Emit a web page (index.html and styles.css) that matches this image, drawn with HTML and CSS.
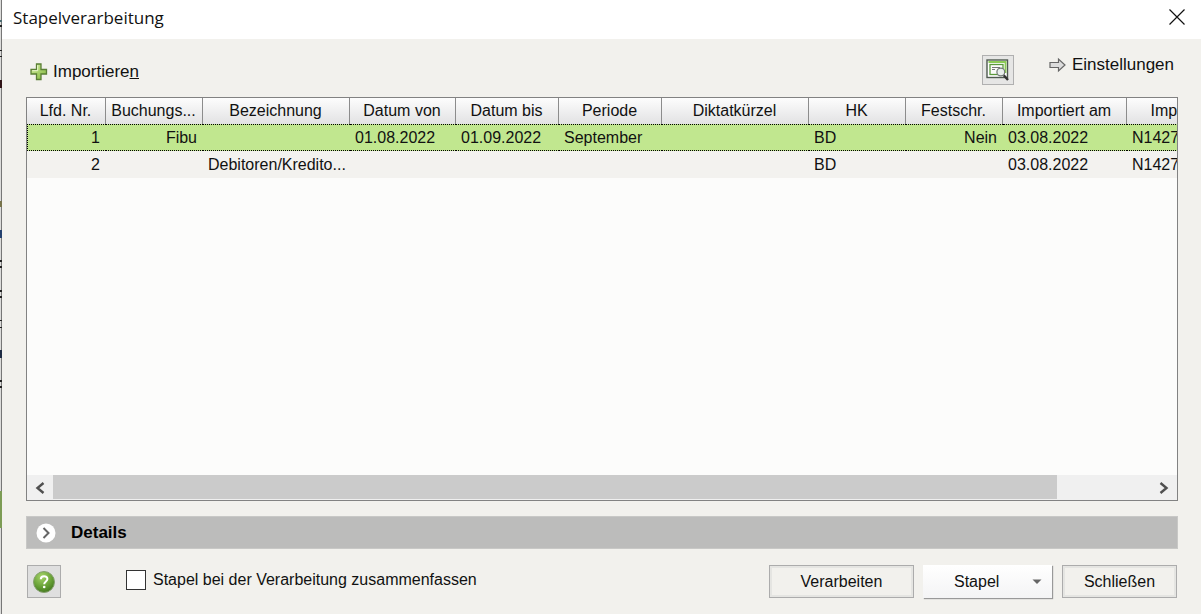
FILE: index.html
```html
<!DOCTYPE html>
<html lang="de">
<head>
    <meta charset="UTF-8">
    <meta name="viewport" content="width=device-width, initial-scale=1.0">
    <title>Stapelverarbeitung</title>
    <link rel="stylesheet" href="styles.css">
</head>
<body>
    <div class="screen">
        <!-- Edge of the window behind the dialog -->
        <svg class="backdrop" width="2" height="614" aria-hidden="true">
            <rect x="0" y="0" width="1" height="614" fill="#dcdcda"/>
            <rect x="1" y="0" width="1" height="614" fill="#777"/>
            <g fill="#222">
                <rect y="20" width="2" height="2" fill="#4a6a70"/>
                <rect y="25" width="2" height="2"/>
                <rect y="50" width="2" height="1"/>
                <rect y="56" width="2" height="1"/>
                <rect y="80" width="2" height="8" fill="#301418"/>
                <rect y="201" width="2" height="6" fill="#77734a"/>
                <rect y="230" width="2" height="8" fill="#24406e"/>
                <rect y="260" width="2" height="2"/>
                <rect y="266" width="2" height="2"/>
                <rect y="290" width="2" height="2"/>
                <rect y="296" width="2" height="2"/>
                <rect y="320" width="2" height="1"/>
                <rect y="327" width="2" height="1"/>
                <rect y="350" width="2" height="8" fill="#1e2c44"/>
                <rect y="380" width="2" height="2"/>
                <rect y="386" width="2" height="2"/>
                <rect y="491" width="2" height="37" fill="#7d9c55"/>
            </g>
        </svg>

        <div class="dialog">
            <header class="titlebar">
                <h1>Stapelverarbeitung</h1>
                <button class="close" aria-label="Fenster schließen">
                    <svg width="16" height="16" viewBox="0 0 16 16"><path d="M.5.5l15 15M15.5.5l-15 15" stroke="#111" stroke-width="1.2"/></svg>
                </button>
            </header>

            <main class="content">
                <div class="toolbar">
                    <button class="link-button import">
                        <svg width="18" height="18" viewBox="0 0 18 18">
                            <defs>
                                <linearGradient id="plus" x1="0" y1="0" x2="1" y2="1">
                                    <stop offset="0" stop-color="#d3eda0"/>
                                    <stop offset="1" stop-color="#7fb53a"/>
                                </linearGradient>
                            </defs>
                            <path d="M6.5 1h4.500v5.500h5.500v4.500h-5.500v5.500h-4.500v-5.500h-5.500v-4.500h5.500z" fill="url(#plus)" stroke="#5a7f35" stroke-width="1.300"/>
                            <path d="M7.700 2.200v5.500h-5.500" fill="none" stroke="#eef9d2"/>
                        </svg>
                        <span>Importiere<u>n</u></span>
                    </button>
                    <button class="preview" aria-label="Vorschau">
                        <svg width="24" height="24" viewBox="0 0 24 24">
                            <rect x="1" y="2" width="20.500" height="17.500" fill="#fff" stroke="#4f5a50" stroke-width="1.400"/>
                            <path d="M2.500 4h18M19.500 3v12" stroke="#8ccb55" stroke-width="1.800" fill="none"/>
                            <rect x="4" y="6.500" width="13" height="10" fill="#fbfcf9" stroke="#5b9a3c" stroke-width="1.300"/>
                            <path d="M6 9.500h8M6 11.500h3" stroke="#777"/>
                            <path d="M17.500 17l4.500 5" stroke="#333" stroke-width="2.400"/>
                            <circle cx="14.800" cy="14" r="3.900" fill="#e9efec" stroke="#727a76" stroke-width="1.200"/>
                        </svg>
                    </button>
                    <button class="link-button settings">
                        <svg width="18" height="16" viewBox="0 0 18 16">
                            <path d="M1 5.500h8.500v-3.500l6.500 6-6.500 6v-3.500h-8.500z" fill="#dcdcdc" stroke="#666" stroke-width="1.200"/>
                        </svg>
                        <span>Einstellungen</span>
                    </button>
                </div>

                <div class="list">
                    <div class="list-view">
                        <table>
                            <colgroup>
                                <col class="w-nr"><col class="w-code"><col class="w-name"><col class="w-from"><col class="w-date"><col class="w-date">
                                <col class="w-name"><col class="w-code"><col class="w-code"><col class="w-import"><col class="w-name">
                            </colgroup>
                            <thead>
                                <tr>
                                    <th>Lfd. Nr.</th>
                                    <th>Buchungs...</th>
                                    <th>Bezeichnung</th>
                                    <th>Datum von</th>
                                    <th>Datum bis</th>
                                    <th>Periode</th>
                                    <th>Diktatkürzel</th>
                                    <th>HK</th>
                                    <th>Festschr.</th>
                                    <th>Importiert am</th>
                                    <th>Importiert von</th>
                                </tr>
                            </thead>
                            <tbody>
                                <tr class="selected">
                                    <td class="right">1</td>
                                    <td class="right">Fibu</td>
                                    <td></td>
                                    <td>01.08.2022</td>
                                    <td>01.09.2022</td>
                                    <td>September</td>
                                    <td></td>
                                    <td>BD</td>
                                    <td class="right">Nein</td>
                                    <td>03.08.2022</td>
                                    <td>N1427</td>
                                </tr>
                                <tr>
                                    <td class="right">2</td>
                                    <td></td>
                                    <td>Debitoren/Kredito...</td>
                                    <td></td>
                                    <td></td>
                                    <td></td>
                                    <td></td>
                                    <td>BD</td>
                                    <td></td>
                                    <td>03.08.2022</td>
                                    <td>N1427</td>
                                </tr>
                            </tbody>
                        </table>
                    </div>
                    <div class="scrollbar">
                        <button aria-label="Nach links">
                            <svg width="10" height="12" viewBox="0 0 10 12"><path d="M8.500 1l-6 5 6 5" fill="none" stroke="#505050" stroke-width="2.400"/></svg>
                        </button>
                        <div class="track"><div class="thumb"></div></div>
                        <button aria-label="Nach rechts">
                            <svg width="10" height="12" viewBox="0 0 10 12"><path d="M1.500 1l6 5-6 5" fill="none" stroke="#505050" stroke-width="2.400"/></svg>
                        </button>
                    </div>
                </div>

                <button class="details">
                    <svg width="20" height="20" viewBox="0 0 20 20">
                        <circle cx="10" cy="10" r="9.500" fill="#fff"/>
                        <path d="M7.500 5l5 5-5 5" fill="none" stroke="#666" stroke-width="2"/>
                    </svg>
                    <span>Details</span>
                </button>

                <footer class="actions">
                    <button class="help" aria-label="Hilfe">
                        <svg width="24" height="24" viewBox="0 0 24 24">
                            <defs>
                                <radialGradient id="ball" cx=".4" cy=".25" r=".8">
                                    <stop offset="0" stop-color="#a6d46a"/>
                                    <stop offset=".6" stop-color="#67a036"/>
                                    <stop offset="1" stop-color="#3f741c"/>
                                </radialGradient>
                            </defs>
                            <circle cx="12" cy="12" r="10.500" fill="url(#ball)" stroke="#86a070"/>
                            <path d="M8.800 9.300c0-4.200 6.600-4 6.600-.3 0 2.400-3.200 2.500-3.200 5.200" fill="none" stroke="#fff" stroke-width="2"/>
                            <circle cx="12.200" cy="17" r="1.300" fill="#fff"/>
                        </svg>
                    </button>
                    <label class="check">
                        <input type="checkbox">
                        <span>Stapel bei der Verarbeitung zusammenfassen</span>
                    </label>
                    <button class="button process">Verarbeiten</button>
                    <button class="menu-button">
                        <span>Stapel</span>
                        <svg width="10" height="6" viewBox="0 0 10 6"><path d="M.5.5h9l-4.500 4.500z" fill="#666"/></svg>
                    </button>
                    <button class="button">Schließen</button>
                </footer>
            </main>
        </div>
    </div>
</body>
</html>
```
FILE: styles.css
```css
* {
  box-sizing: border-box;
}

body {
  margin: 0;
  background-color: #f2f1ed;
  color: #111;
  font-family: "Liberation Sans", Arial, sans-serif;
  font-size: 16px;
}

button {
  margin: 0;
  padding: 0;
  border: none;
  background: none;
  color: inherit;
  font: inherit;
}

svg {
  display: block;
  flex-shrink: 0;
}

.screen {
  display: flex;
  height: 100vh;
  overflow: hidden;
}

.dialog {
  flex: 1;
  min-width: 0;
  display: flex;
  flex-direction: column;
}

.titlebar {
  display: flex;
  align-items: center;
  justify-content: space-between;
  height: 39px;
  padding: 0 16px 5px 11px;
  background-color: #fff;
}

.titlebar h1 {
  margin: 0;
  font-family: "Open Sans", sans-serif;
  font-size: 17px;
  font-weight: 400;
}

.content {
  flex: 1;
  min-height: 0;
  display: flex;
  flex-direction: column;
  padding: 16px 23px 16px 24px;
}

/* Toolbar */
.toolbar {
  display: flex;
  align-items: flex-start;
  height: 42px;
}

.link-button {
  display: flex;
  align-items: center;
  gap: 5px;
  height: 20px;
  font-size: 17px;
}

.import {
  margin: 7px auto 0 4px;
}

.preview {
  display: flex;
  align-items: center;
  justify-content: center;
  width: 32px;
  height: 30px;
  border: 1px solid #b0b0b0;
  background-color: #e6e6e5;
}

.settings {
  margin: 0 4px 0 35px;
}

/* List */
.list {
  flex: 1;
  min-height: 0;
  display: flex;
  flex-direction: column;
  border: 1px solid #828282;
  background-color: #fcfcfb;
}

.list-view {
  flex: 1;
  overflow: hidden;
}

table {
  width: 1246px;
  table-layout: fixed;
  border-collapse: separate;
  border-spacing: 0;
}

.w-nr { width: 79px; }
.w-code { width: 97px; }
.w-name { width: 147px; }
.w-from { width: 106px; }
.w-date { width: 103px; }
.w-import { width: 124px; }

th,
td {
  padding: 0 6px 0 5px;
  overflow: hidden;
  white-space: nowrap;
  text-align: left;
  font-weight: 400;
}

th {
  height: 26px;
  padding: 0 5px 0 4px;
  border-right: 1px solid #8c8c8c;
  background: linear-gradient(#fdfdfd, #e2e2e3);
  text-align: center;
}

td {
  height: 27px;
  background-color: #f3f2ef;
}

.right {
  text-align: right;
}

.selected td {
  border-top: 1px dotted #000;
  border-bottom: 1px dotted #000;
  background-color: #c1e78f;
}

.selected td:first-child {
  border-left: 1px dotted #000;
}

.scrollbar {
  display: flex;
  height: 25px;
  background-color: #f0f0f0;
}

.scrollbar button {
  display: flex;
  align-items: center;
  justify-content: center;
  width: 26px;
}

.track {
  flex: 1;
}

.thumb {
  width: 91.4%;
  height: 24px;
  background-color: #cbcbcb;
}

/* Details bar */
.details {
  display: flex;
  align-items: center;
  gap: 15px;
  height: 33px;
  margin-top: 15px;
  padding-left: 9px;
  border: 1px solid #c8c8c6;
  background-color: #bcbcbb;
  color: #000;
  font-size: 17px;
  font-weight: 700;
}

/* Footer */
.actions {
  display: flex;
  height: 33px;
  margin: 16px 1px 0 1px;
}

.help {
  display: flex;
  align-items: center;
  justify-content: center;
  width: 34px;
  border: 1px solid #acacac;
  background-color: #dfdfdf;
}

.check {
  display: flex;
  align-items: center;
  gap: 7px;
  height: 30px;
  margin: 0 auto 0 65px;
}

.check input {
  appearance: none;
  width: 20px;
  height: 20px;
  margin: 0;
  border: 1px solid #333;
  background-color: #fff;
}

.button {
  width: 115px;
  border: 1px solid #acacac;
  box-shadow: inset 0 0 0 2px #e5e5e2;
}

.process {
  width: 145px;
}

.menu-button {
  display: flex;
  align-items: center;
  justify-content: space-between;
  width: 129px;
  margin: 0 10px 0 9px;
  padding: 0 10px 0 31px;
  background: linear-gradient(#fff, #f4f4f5);
  box-shadow: 1px 1px 1px #999;
}
```
